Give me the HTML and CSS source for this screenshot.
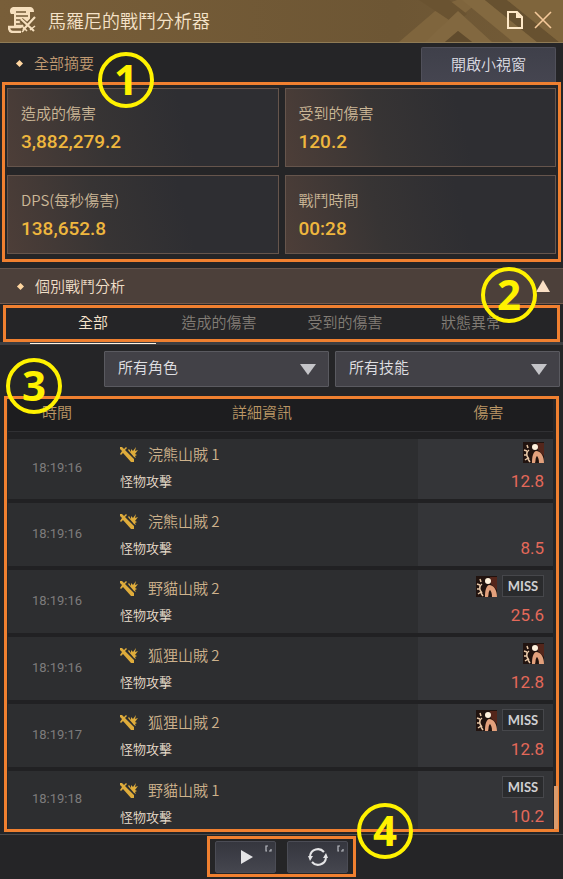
FILE: index.html
```html
<!DOCTYPE html>
<html lang="zh-Hant">
<head>
    <meta charset="UTF-8">
    <meta name="viewport" content="width=device-width, initial-scale=1.0">
    <title>馬羅尼的戰鬥分析器</title>
    <link rel="stylesheet" href="styles.css">
</head>
<body>
    <!-- Shared icons -->
    <svg class="sprite" aria-hidden="true">
        <symbol id="icon-attack" viewBox="0 0 18 16">
            <path d="M0 1l2 0 2 2 2-2 1 1-2 2 9 9v3h-3l-8-9-2 2-1-1 2-3-2-2z" fill="#dfac3b"/>
            <path d="M8 4l1-1 2 3V3l2 2 3-4-1 4 3-1-3 4 2 1-2 1 1 2-2-1z" fill="#dfac3b"/>
        </symbol>
        <symbol id="icon-stagger" viewBox="0 0 21 21">
            <rect width="21" height="21" fill="#21130f"/>
            <path d="M14 1h7v13l-6-6z" fill="#54261b"/>
            <path d="M9 21c0-6 1-11 4-12 5 0 8 5 8 12h-5c0-4-1-6-2-7-2 2-1 5-2 7z" fill="#e2a07c"/>
            <circle cx="12" cy="5" r="3" fill="#fff1dc"/>
            <path d="M4 3l1 3M1 8l3 1M6 8c-3 2-3 6 0 9M1 13h3M2 18l3-2M5 17l2 3" fill="none" stroke="#e9c9a8" stroke-width="1.5"/>
        </symbol>
        <symbol id="icon-corner" viewBox="0 0 7 7">
            <path d="M3 1H1v5h1M4 6h2V4" fill="none" stroke="#b9bcc2" stroke-width="1.2"/>
        </symbol>
    </svg>

    <div class="window">
        <header class="titlebar">
            <svg class="titlebar-pattern" viewBox="0 0 164 42" aria-hidden="true">
                <path d="M0 42L42 6 58 0 82 0 30 42z" fill="#7f653d"/>
                <path d="M20 0h30l18 14-12 10z" fill="#6a5331"/>
                <path d="M26 42L59 11l34 31H73L59 31 46 42z" fill="#826840"/>
                <path d="M46 42l13-11 14 11z" fill="#604b2d"/>
                <path d="M63 0h23l52 42h-24z" fill="#836940"/>
                <path d="M86 0h22l52 42h-22z" fill="#675130"/>
                <path d="M108 0h56v42h-4z" fill="#7f653c"/>
            </svg>
            <svg class="titlebar-logo" viewBox="0 0 28 26" aria-hidden="true">
                <path d="M5 0h16c4 0 5 2 5 5h-4v14H6V7H3C1 4 2 1 5 0z" fill="#f6dfbd"/>
                <path d="M8 5h10M8 9h12M8 13h8M8 17h6" stroke="#735b37" stroke-width="1.6"/>
                <path d="M0 20h16M1 20c0 3 1 5 4 5h8" fill="none" stroke="#f6dfbd" stroke-width="2.4"/>
                <path d="M27 10L14 24M13 13l13 11" stroke="#735b37" stroke-width="5"/>
                <path d="M27 10L15 23M13 12l13 12" stroke="#f6dfbd" stroke-width="2.2"/>
                <path d="M14 19l5 5M27 19l-5 4M14 25l2-2" stroke="#f6dfbd" stroke-width="1.6"/>
            </svg>
            <h1>馬羅尼的戰鬥分析器</h1>
            <button class="icon-button" type="button" aria-label="新增頁面">
                <svg width="18" height="20" viewBox="0 0 18 20"><path d="M2 2h9l5 5v11H2z" fill="none" stroke="#ffe9c8" stroke-width="2"/><path d="M10 2v6h6z" fill="#ffe9c8"/></svg>
            </button>
            <button class="icon-button" type="button" aria-label="關閉">
                <svg width="18" height="18" viewBox="0 0 18 18"><path d="M1 1l16 16M17 1L1 17" stroke="#f5c99a" stroke-width="1.6"/></svg>
            </button>
        </header>

        <section class="summary">
            <div class="summary-head">
                <h2 class="bullet">全部摘要</h2>
                <button class="popup-button" type="button">開啟小視窗</button>
            </div>
            <div class="frame cards">
                <span class="badge badge-1">1</span>
                <div class="card">
                    <div class="card-label">造成的傷害</div>
                    <div class="card-value">3,882,279.2</div>
                </div>
                <div class="card">
                    <div class="card-label">受到的傷害</div>
                    <div class="card-value">120.2</div>
                </div>
                <div class="card">
                    <div class="card-label">DPS(每秒傷害)</div>
                    <div class="card-value">138,652.8</div>
                </div>
                <div class="card">
                    <div class="card-label">戰鬥時間</div>
                    <div class="card-value">00:28</div>
                </div>
            </div>
        </section>

        <section class="analysis">
            <div class="section-bar">
                <h2 class="bullet">個別戰鬥分析</h2>
                <button class="icon-button" type="button" aria-label="收合">
                    <svg width="14" height="12" viewBox="0 0 14 12"><path d="M7 0l7 12H0z" fill="#f9dfc4"/></svg>
                </button>
            </div>

            <div class="tabs-wrap">
                <nav class="frame tabs">
                    <span class="badge badge-2">2</span>
                    <a class="tab active" href="#all">全部</a>
                    <a class="tab" href="#dealt">造成的傷害</a>
                    <a class="tab" href="#taken">受到的傷害</a>
                    <a class="tab" href="#status">狀態異常</a>
                </nav>
            </div>

            <div class="filters">
                <div class="select">
                    <select aria-label="角色">
                        <option>所有角色</option>
                    </select>
                    <svg width="16" height="11" viewBox="0 0 16 11"><path d="M0 0h16L8 11z" fill="#c4c4c8"/></svg>
                </div>
                <div class="select">
                    <select aria-label="技能">
                        <option>所有技能</option>
                    </select>
                    <svg width="16" height="11" viewBox="0 0 16 11"><path d="M0 0h16L8 11z" fill="#c4c4c8"/></svg>
                </div>
            </div>

            <div class="frame log">
                <span class="badge badge-3">3</span>
                <table>
                    <thead>
                        <tr>
                            <th class="col-time">時間</th>
                            <th>詳細資訊</th>
                            <th class="col-damage">傷害</th>
                        </tr>
                    </thead>
                    <tbody>
                        <tr>
                            <td class="time">18:19:16</td>
                            <td class="detail">
                                <div class="name"><svg><use href="#icon-attack"/></svg>浣熊山賊 1</div>
                                <div class="skill">怪物攻擊</div>
                            </td>
                            <td class="damage">
                                <div class="status"><svg><use href="#icon-stagger"/></svg></div>
                                <div class="value">12.8</div>
                            </td>
                        </tr>
                        <tr>
                            <td class="time">18:19:16</td>
                            <td class="detail">
                                <div class="name"><svg><use href="#icon-attack"/></svg>浣熊山賊 2</div>
                                <div class="skill">怪物攻擊</div>
                            </td>
                            <td class="damage">
                                <div class="status"></div>
                                <div class="value">8.5</div>
                            </td>
                        </tr>
                        <tr>
                            <td class="time">18:19:16</td>
                            <td class="detail">
                                <div class="name"><svg><use href="#icon-attack"/></svg>野貓山賊 2</div>
                                <div class="skill">怪物攻擊</div>
                            </td>
                            <td class="damage">
                                <div class="status"><svg><use href="#icon-stagger"/></svg><span class="miss">MISS</span></div>
                                <div class="value">25.6</div>
                            </td>
                        </tr>
                        <tr>
                            <td class="time">18:19:16</td>
                            <td class="detail">
                                <div class="name"><svg><use href="#icon-attack"/></svg>狐狸山賊 2</div>
                                <div class="skill">怪物攻擊</div>
                            </td>
                            <td class="damage">
                                <div class="status"><svg><use href="#icon-stagger"/></svg></div>
                                <div class="value">12.8</div>
                            </td>
                        </tr>
                        <tr>
                            <td class="time">18:19:17</td>
                            <td class="detail">
                                <div class="name"><svg><use href="#icon-attack"/></svg>狐狸山賊 2</div>
                                <div class="skill">怪物攻擊</div>
                            </td>
                            <td class="damage">
                                <div class="status"><svg><use href="#icon-stagger"/></svg><span class="miss">MISS</span></div>
                                <div class="value">12.8</div>
                            </td>
                        </tr>
                        <tr>
                            <td class="time">18:19:18</td>
                            <td class="detail">
                                <div class="name"><svg><use href="#icon-attack"/></svg>野貓山賊 1</div>
                                <div class="skill">怪物攻擊</div>
                            </td>
                            <td class="damage">
                                <div class="status"><span class="miss">MISS</span></div>
                                <div class="value">10.2</div>
                            </td>
                        </tr>
                    </tbody>
                </table>
                <span class="scroll-thumb"></span>
            </div>
        </section>

        <footer class="controls">
            <div class="frame buttons">
                <span class="badge badge-4">4</span>
                <button class="control" type="button" aria-label="開始">
                    <svg width="14" height="14" viewBox="0 0 14 14"><path d="M2 0l12 7-12 7z" fill="#e4e4e6"/></svg>
                    <svg class="corner"><use href="#icon-corner"/></svg>
                </button>
                <button class="control" type="button" aria-label="重置">
                    <svg width="20" height="20" viewBox="0 0 20 20">
                        <path d="M2 9a8 8 0 0 1 14-4M18 11a8 8 0 0 1-14 4" fill="none" stroke="#e4e4e6" stroke-width="2"/>
                        <path d="M15 11l3-5 2 5zM0 9l2 5 3-5z" fill="#e4e4e6"/>
                    </svg>
                    <svg class="corner"><use href="#icon-corner"/></svg>
                </button>
            </div>
        </footer>
    </div>
</body>
</html>
```

FILE: styles.css
```css
* {
    box-sizing: border-box;
}

body {
    margin: 0;
    background-color: #252527;
    color: #d8d4cc;
    font-family: "Noto Sans CJK TC", sans-serif;
    font-size: 15px;
    font-weight: 350;
    line-height: 24px;
}

h1, h2 {
    margin: 0;
    font-weight: 350;
}

button, select {
    font: inherit;
    color: inherit;
}

.sprite {
    position: absolute;
    width: 0;
    height: 0;
}

.window {
    min-height: 100vh;
}

.icon-button {
    display: flex;
    padding: 0;
    border: none;
    background: none;
    cursor: pointer;
}

/* Orange frames and numbered badges */
.frame {
    position: relative;
    border: 3px solid #f08030;
}

.badge {
    position: absolute;
    z-index: 2;
    width: 56px;
    height: 56px;
    border: 4px solid #fff200;
    border-radius: 50%;
    color: #fff200;
    font-family: "Open Sans", sans-serif;
    font-size: 42px;
    font-weight: 700;
    line-height: 46px;
    text-align: center;
}

.badge-1 {
    left: 93px;
    top: -33px;
}

.badge-2 {
    right: 20px;
    top: -41px;
}

.badge-3 {
    left: -1px;
    top: -41px;
}

.badge-4 {
    right: -60px;
    top: -36px;
}

/* Title bar */
.titlebar {
    position: relative;
    display: flex;
    align-items: center;
    gap: 10px;
    height: 43px;
    padding: 0 11px 2px 8px;
    border-bottom: 1px solid #8f7b55;
    background: linear-gradient(90deg, #785e39, #6d5634 70%, #735b37);
}

.titlebar-pattern {
    position: absolute;
    right: 0;
    top: 0;
    width: 164px;
    height: 42px;
}

.titlebar-logo {
    width: 28px;
    height: 26px;
}

.titlebar h1 {
    flex: 1;
    padding-left: 2px;
    color: #f5e2c8;
    font-size: 18px;
}

.titlebar .icon-button {
    position: relative;
}

.bullet {
    display: flex;
    align-items: center;
    gap: 12px;
    font-size: 15px;
}

.bullet::before {
    content: "";
    width: 5px;
    height: 5px;
    background-color: #ffd6a0;
    transform: rotate(45deg);
}

/* Summary */
.summary {
    padding: 0 2px 6px;
}

.summary-head {
    display: flex;
    justify-content: space-between;
    align-items: flex-end;
    height: 39px;
    padding: 0 5px 0 15px;
}

.summary-head .bullet {
    height: 38px;
    color: #c09a72;
}

.popup-button {
    width: 135px;
    height: 35px;
    padding: 0 0 2px;
    border: 1px solid #50505a;
    border-bottom: none;
    border-radius: 2px 2px 0 0;
    background: linear-gradient(#3f404a, #454550);
    color: #dedee4;
}

.cards {
    display: grid;
    grid-template-columns: 1fr 1fr;
    gap: 8px 6px;
    padding: 3px 2px 5px;
}

.card {
    height: 79px;
    padding: 12px 13px;
    border: 1px solid #66554c;
    background: linear-gradient(75deg, #4d3e38, #373434 35%, #2e2e32 65%);
}

.card-label {
    color: #cbb797;
}

.card-value {
    margin-top: 5px;
    color: #efb73e;
    font-family: "Roboto", sans-serif;
    font-size: 19px;
    font-weight: 500;
}

/* Analysis */
.section-bar {
    display: flex;
    justify-content: space-between;
    align-items: center;
    height: 36px;
    padding: 0 13px 0 18px;
    border-top: 1px solid #66554d;
    border-bottom: 1px solid #745a4c;
    background-color: #4c403a;
    color: #f0dfc8;
}

.tabs-wrap {
    padding: 1px 3px 0;
    border-bottom: 3px solid #3e3e41;
}

.tabs {
    display: flex;
    height: 37px;
    padding: 0 23px 0 24px;
}

.tab {
    position: relative;
    flex: 1;
    color: #827d76;
    line-height: 28px;
    text-align: center;
    text-decoration: none;
}

.tab.active {
    color: #f6e4cc;
}

.tab.active::after {
    content: "";
    position: absolute;
    left: 0;
    right: 0;
    bottom: -5px;
    height: 1px;
    background-color: #fff3e0;
}

.filters {
    display: flex;
    gap: 6px;
    padding: 6px 3px 9px 104px;
}

.select {
    position: relative;
    flex: 1;
}

.select select {
    display: block;
    width: 100%;
    height: 36px;
    padding: 0 40px 4px 13px;
    border: 1px solid #5a5a60;
    border-radius: 1px;
    background-color: #424147;
    color: #e0e0e4;
    appearance: none;
}

.select svg {
    position: absolute;
    right: 13px;
    top: 13px;
    pointer-events: none;
}

/* Battle log */
.log {
    margin: 0 4px;
    padding: 0 3px 0 1px;
}

.log table {
    width: 100%;
    border-collapse: separate;
    border-spacing: 0;
    table-layout: fixed;
    background-color: #212123;
}

.log th {
    height: 33px;
    padding: 0 0 6px;
    border-bottom: 1px solid #303033;
    background-color: #1d1d1f;
    color: #bb9766;
    font-weight: 350;
}

.log .col-time {
    width: 98px;
}

.log .col-damage {
    width: 135px;
    padding-left: 6px;
}

.log td {
    padding: 0;
    border-bottom: 4px solid #212123;
    background-color: #2d2e30;
    background-clip: padding-box;
}

.log .time {
    padding-bottom: 2px;
    color: #7d7c7c;
    font-family: "Roboto", sans-serif;
    font-size: 13px;
    font-weight: 400;
    text-align: center;
}

.log .detail {
    padding: 6px 12px 8px 14px;
}

.name {
    display: flex;
    align-items: center;
    color: #cdb28c;
    white-space: pre;
}

.name svg {
    width: 18px;
    height: 16px;
    margin-right: 10px;
}

.skill {
    margin-top: 5px;
    color: #eadfcd;
    font-size: 13px;
    line-height: 20px;
}

.log .damage {
    padding: 5px 9px 6px;
    background-color: #343538;
}

.status {
    display: flex;
    justify-content: flex-end;
    align-items: center;
    gap: 5px;
    height: 22px;
}

.status svg {
    width: 21px;
    height: 21px;
}

.miss {
    width: 42px;
    height: 22px;
    border: 1px solid #46474b;
    background-color: #2a2b2d;
    color: #d0d0d2;
    font-family: "Lato", sans-serif;
    font-size: 13px;
    font-weight: 700;
    line-height: 20px;
    text-align: center;
}

.value {
    margin-top: 6px;
    color: #e4695a;
    font-family: "Roboto", sans-serif;
    font-size: 17px;
    font-weight: 400;
    text-align: right;
}

/* The list is scrolled, so the first and last rows are cut */
.log tbody tr:first-child td {
    border-top: 7px solid #212123;
}

.log tbody tr:first-child .detail {
    padding-top: 3px;
}

.log tbody tr:first-child .damage {
    padding-top: 2px;
}

.log tbody tr:last-child td {
    border-bottom: none;
}

.log tbody tr:last-child .detail {
    padding-bottom: 1px;
}

.log tbody tr:last-child .damage {
    padding-bottom: 1px;
}

.scroll-thumb {
    position: absolute;
    right: -2px;
    bottom: 0;
    width: 4px;
    height: 43px;
    background-color: #d99a6c;
}

/* Bottom controls */
.controls {
    display: flex;
    justify-content: center;
    margin-top: 2px;
    padding: 1px 0 2px;
    border-top: 1px solid #48484a;
}

.buttons {
    display: flex;
    gap: 11px;
    height: 41px;
    padding: 2px 5px 0;
}

.control {
    position: relative;
    display: flex;
    justify-content: center;
    align-items: center;
    width: 61px;
    height: 32px;
    padding: 0;
    border: 1px solid #4b4c55;
    border-radius: 2px;
    background: linear-gradient(#35363e, #45464f);
}

.control .corner {
    position: absolute;
    right: 3px;
    top: 3px;
    width: 7px;
    height: 7px;
}
```
